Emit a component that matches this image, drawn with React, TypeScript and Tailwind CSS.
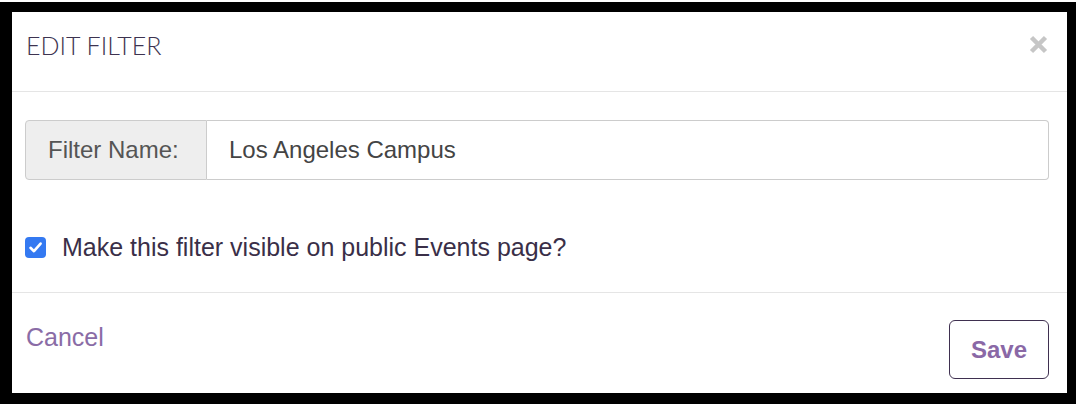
import { useState } from 'react';

const SANS = 'font-["Liberation_Sans",Arial,sans-serif]';

function CloseIcon() {
  return (
    <svg width="19" height="19" viewBox="0 0 19 19" className="block">
      <path d="M2.5 2.5 L16.5 16.5 M16.5 2.5 L2.5 16.5" stroke="#c6c6c6" strokeWidth="4.5" strokeLinecap="butt" />
    </svg>
  );
}

function CheckBox({ checked, onToggle }: { checked: boolean; onToggle: () => void }) {
  return (
    <button
      type="button"
      onClick={onToggle}
      className={`w-[21px] h-[21px] rounded-[4px] flex items-center justify-center shrink-0 ${
        checked ? 'bg-[#3479f1]' : 'bg-white border border-[#999]'
      }`}
    >
      {checked && (
        <svg width="15" height="15" viewBox="0 0 15 15">
          <path d="M2.5 7.8 L6 11.2 L12.6 3.6" fill="none" stroke="#fff" strokeWidth="2.6" strokeLinecap="round" strokeLinejoin="round" />
        </svg>
      )}
    </button>
  );
}

export default function App() {
  const [name, setName] = useState('Los Angeles Campus');
  const [visible, setVisible] = useState(true);

  return (
    <div className="w-[1076px] h-[404px] bg-white pt-[2px]">
      <div className="h-[402px] bg-black pt-[10px] pl-[12px] pr-[9px] pb-[11px] flex">
        <div className={`flex-1 bg-white flex flex-col ${SANS}`}>
          {/* Header */}
          <div className="h-[80px] border-b border-[#e5e5e5] flex items-start justify-between">
            <h3 className="pl-[14px] pt-[20px] text-[25px] leading-[26px] font-light text-[#3d3350] font-['Lato',sans-serif]">
              EDIT FILTER
            </h3>
            <button type="button" className="mt-[23px] mr-[19px]">
              <CloseIcon />
            </button>
          </div>

          {/* Body */}
          <div className="h-[201px] border-b border-[#e5e5e5] pl-[13px] pr-[18px] pt-[28px]">
            <div className="flex h-[60px]">
              <span className="w-[182px] shrink-0 flex items-center pl-[22px] bg-[#eeeeee] border border-[#cccccc] rounded-l-[4px] text-[24px] text-[#555555]">
                Filter Name:
              </span>
              <input
                value={name}
                onChange={(e) => setName(e.target.value)}
                className="flex-1 min-w-0 border border-l-0 border-[#cccccc] rounded-r-[4px] pl-[22px] text-[24px] text-[#444444] outline-none"
              />
            </div>
            <label className="flex items-center gap-[16px] mt-[52px]">
              <CheckBox checked={visible} onToggle={() => setVisible(!visible)} />
              <span className="text-[25px] leading-[30px] text-[#3a2f48]">
                Make this filter visible on public Events page?
              </span>
            </label>
          </div>

          {/* Footer */}
          <div className="flex-1 flex items-start justify-between">
            <a href="#" className="pl-[14px] pt-[29px] text-[25px] leading-[30px] text-[#8a6ca6]">
              Cancel
            </a>
            <button
              type="button"
              className="mt-[27px] mr-[18px] w-[100px] h-[59px] border border-[#3f3050] rounded-[6px] text-[24px] font-bold text-[#8a68a6]"
            >
              Save
            </button>
          </div>
        </div>
      </div>
    </div>
  );
}
